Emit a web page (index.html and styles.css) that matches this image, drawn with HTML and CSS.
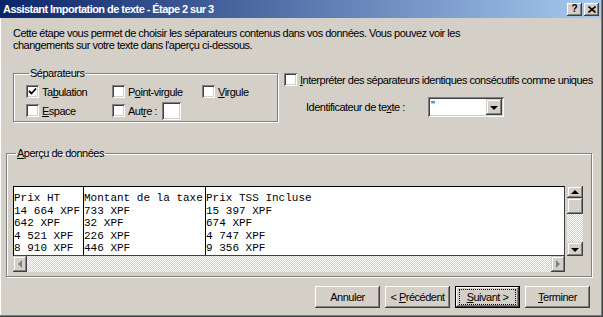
FILE: index.html
```html
<!DOCTYPE html>
<html lang="fr">
<head>
  <meta charset="UTF-8" />
  <title>Assistant Importation de texte</title>
  <link rel="stylesheet" href="styles.css">
</head>
<body>

  <div class="window">
    <!-- Title bar -->
    <div class="titlebar">
      <span class="title">Assistant Importation de texte - Étape 2 sur 3</span>
      <div class="caption-btns">
        <span class="cbtn help">?</span>
        <span class="cbtn close">
          <svg width="8" height="7" viewBox="0 0 8 7"><path d="M0.5 0.5 L7.5 6.5 M7.5 0.5 L0.5 6.5" stroke="#000" stroke-width="1.6"/></svg>
        </span>
      </div>
    </div>

    <div class="content">
      <p class="intro">Cette étape vous permet de choisir les séparateurs contenus dans vos données. Vous pouvez voir les<br>changements sur votre texte dans l'aperçu ci-dessous.</p>

      <div class="options">
        <fieldset class="group sep-group">
          <legend>Séparateurs</legend>
          <div class="sep-grid">
            <label class="check"><span class="box"><svg width="9" height="9" viewBox="0 0 9 9"><path d="M1 4 L3.5 6.5 L8 1.5" fill="none" stroke="#000" stroke-width="1.8"/></svg></span><span>Ta<u>b</u>ulation</span></label>
            <label class="check"><span class="box"></span><span>P<u>o</u>int-virgule</span></label>
            <label class="check"><span class="box"></span><span><u>V</u>irgule</span></label>
            <label class="check"><span class="box"></span><span><u>E</u>space</span></label>
            <label class="check"><span class="box"></span><span>Aut<u>r</u>e :</span><span class="field other"></span></label>
          </div>
        </fieldset>

        <div class="right-opts">
          <label class="check"><span class="box"></span><span><u>I</u>nterpréter des séparateurs identiques consécutifs comme uniques</span></label>
          <div class="qualifier">
            <span class="qlabel">Identificateur de te<u>x</u>te :</span>
            <div class="combo">
              <span class="combo-val">"</span>
              <span class="sbtn combo-btn"><span class="arrow down"></span></span>
            </div>
          </div>
        </div>
      </div>

      <fieldset class="group preview-group">
        <legend><u>A</u>perçu de données</legend>
        <div class="preview">
          <div class="pv-main">
            <div class="pv-box">
              <div class="col c1">Prix HT
14 664 XPF
642 XPF
4 521 XPF
8 910 XPF</div>
              <div class="col c2">Montant de la taxe
733 XPF
32 XPF
226 XPF
446 XPF</div>
              <div class="col c3">Prix TSS Incluse
15 397 XPF
674 XPF
4 747 XPF
9 356 XPF</div>
            </div>
            <div class="hscroll">
              <span class="sbtn"><span class="arrow left off"></span></span>
              <span class="track"></span>
              <span class="sbtn"><span class="arrow right off"></span></span>
            </div>
          </div>
          <div class="vscroll">
            <span class="sbtn up-btn"><span class="arrow up"></span></span>
            <span class="sbtn thumb"></span>
            <span class="track"></span>
            <span class="sbtn down-btn"><span class="arrow down"></span></span>
          </div>
        </div>
      </fieldset>

      <div class="actions">
        <button class="btn">Annuler</button>
        <button class="btn">&lt; <u>P</u>récédent</button>
        <button class="btn default"><span class="focus"><u>S</u>uivant &gt;</span></button>
        <button class="btn"><u>T</u>erminer</button>
      </div>
    </div>
  </div>

</body>
</html>
```

FILE: styles.css
```css
* {
  margin: 0;
  padding: 0;
  box-sizing: border-box;
}

body {
  background: #d4d0c8;
  font-family: 'Liberation Sans', Arial, sans-serif;
  font-size: 11px;
  letter-spacing: -0.5px;
  color: #000;
}

u {
  text-decoration: underline;
  text-underline-offset: 1px;
}

.window {
  width: 603px;
  height: 317px;
  background: #d4d0c8;
  box-shadow:
    inset -1px -1px 0 #404040,
    inset -2px -2px 0 #808080,
    inset 1px 0 0 #fff;
  padding: 0 2px 2px 0;
}

/* Title bar */
.titlebar {
  height: 18px;
  background: linear-gradient(to right, #0a246a, #a6caf0);
  display: flex;
  align-items: center;
  justify-content: space-between;
  padding: 0 2px 0 3px;
}

.title {
  color: #fff;
  font-weight: bold;
  font-size: 11px;
  letter-spacing: -0.55px;
  white-space: nowrap;
}

.caption-btns {
  display: flex;
  gap: 2px;
}

.cbtn {
  width: 15px;
  height: 13px;
  background: #d4d0c8;
  box-shadow:
    inset -1px -1px 0 #404040,
    inset 1px 1px 0 #fff,
    inset -2px -2px 0 #808080;
  display: flex;
  align-items: center;
  justify-content: center;
}

.cbtn.help {
  font-weight: bold;
  font-size: 10px;
  letter-spacing: 0;
  line-height: 1;
  padding-bottom: 1px;
}

/* Content */
.content {
  padding: 0 9px 0 6px;
}

.intro {
  margin: 9px 0 0 7px;
  line-height: 12px;
  white-space: nowrap;
}

.options {
  display: flex;
  align-items: flex-start;
  margin-top: 16px;
  margin-left: 7px;
}

.group {
  border: 1px solid #808080;
  box-shadow: 1px 1px 0 #fff, inset 1px 1px 0 #fff;
}

.group legend {
  padding: 0 1px;
  margin-left: 3px;
  line-height: 13px;
}

.sep-group {
  width: 265px;
  flex-shrink: 0;
  padding: 2px 0 1px 12px;
}

.sep-grid {
  display: grid;
  grid-template-columns: 86px 90px auto;
  grid-auto-rows: 19px;
}

.check {
  display: flex;
  align-items: center;
  gap: 3px;
  white-space: nowrap;
}

.box {
  width: 13px;
  height: 13px;
  background: #fff;
  box-shadow:
    inset 1px 1px 0 #808080,
    inset -1px -1px 0 #fff,
    inset 2px 2px 0 #404040,
    inset -2px -2px 0 #d4d0c8;
  display: flex;
  align-items: center;
  justify-content: center;
  flex-shrink: 0;
}

.field {
  background: #fff;
  box-shadow:
    inset 1px 1px 0 #808080,
    inset -1px -1px 0 #fff,
    inset 2px 2px 0 #404040,
    inset -2px -2px 0 #d4d0c8;
}

.field.other {
  width: 19px;
  height: 18px;
  margin-left: 2px;
}

.right-opts {
  margin: 6px 0 0 6px;
}

.right-opts > .check {
  height: 13px;
}

.qualifier {
  display: flex;
  align-items: center;
  margin: 11px 0 0 22px;
}

.qlabel {
  width: 122px;
}

.combo {
  width: 76px;
  height: 20px;
  background: #fff;
  box-shadow:
    inset 1px 1px 0 #808080,
    inset -1px -1px 0 #fff,
    inset 2px 2px 0 #404040,
    inset -2px -2px 0 #d4d0c8;
  display: flex;
  align-items: flex-start;
  justify-content: space-between;
  padding: 2px;
}

.combo-val {
  padding-left: 1px;
  line-height: 12px;
}

/* Raised scroll/drop buttons */
.sbtn {
  display: flex;
  align-items: center;
  justify-content: center;
  background: #d4d0c8;
  box-shadow:
    inset -1px -1px 0 #404040,
    inset 1px 1px 0 #d4d0c8,
    inset -2px -2px 0 #808080,
    inset 2px 2px 0 #fff;
  flex-shrink: 0;
}

.combo-btn {
  width: 16px;
  height: 16px;
}

.arrow {
  width: 0;
  height: 0;
  border: 4px solid transparent;
}

.arrow.down { border-top: 4px solid #000; border-bottom: 0; margin-top: 1px; }
.arrow.up { border-bottom: 4px solid #000; border-top: 0; }
.arrow.left { border-right: 4px solid #000; border-left: 0; }
.arrow.right { border-left: 4px solid #000; border-right: 0; }
.arrow.left.off { border-right-color: #808080; }
.arrow.right.off { border-left-color: #808080; }

/* Preview */
.preview-group {
  margin-top: 25px;
  padding: 26px 0 4px 6px;
}

.preview {
  display: flex;
  gap: 2px;
}

.pv-main {
  width: 552px;
}

.pv-box {
  height: 70px;
  background: #fff;
  border-top: 1px solid #000;
  border-left: 1px solid #000;
  border-right: 1px solid #404040;
  border-bottom: 1px solid #404040;
  display: flex;
  font-family: 'Liberation Mono', 'Courier New', monospace;
  font-size: 11px;
  letter-spacing: 0;
  line-height: 12.5px;
}

.col {
  white-space: pre;
  padding-top: 5px;
}

.c1 { width: 70px; border-right: 1px solid #000; }
.c2 { width: 122px; border-right: 1px solid #000; }
.c3 { flex: 1; }

.track {
  flex: 1;
  background-image: conic-gradient(#fff 25%, #d4d0c8 0 50%, #fff 0 75%, #d4d0c8 0);
  background-size: 2px 2px;
}

.hscroll {
  display: flex;
  height: 16px;
}

.hscroll .sbtn {
  width: 14px;
}

.vscroll {
  width: 16px;
  height: 70px;
  display: flex;
  flex-direction: column;
}

.up-btn { height: 12px; }
.thumb { height: 16px; }
.down-btn { height: 14px; }

/* Buttons */
.actions {
  display: flex;
  justify-content: flex-end;
  gap: 5px;
  margin-top: 9px;
  padding-right: 2px;
}

.btn {
  width: 65px;
  height: 22px;
  background: #d4d0c8;
  border: none;
  font-family: inherit;
  font-size: 11px;
  letter-spacing: -0.5px;
  color: #000;
  box-shadow:
    inset -1px -1px 0 #404040,
    inset 1px 1px 0 #fff,
    inset -2px -2px 0 #808080;
}

.btn.default {
  border: 1px solid #000;
  display: flex;
  align-items: center;
  justify-content: center;
}

.focus {
  border: 1px dotted #000;
  padding: 1px 7px;
  line-height: 12px;
}
```
